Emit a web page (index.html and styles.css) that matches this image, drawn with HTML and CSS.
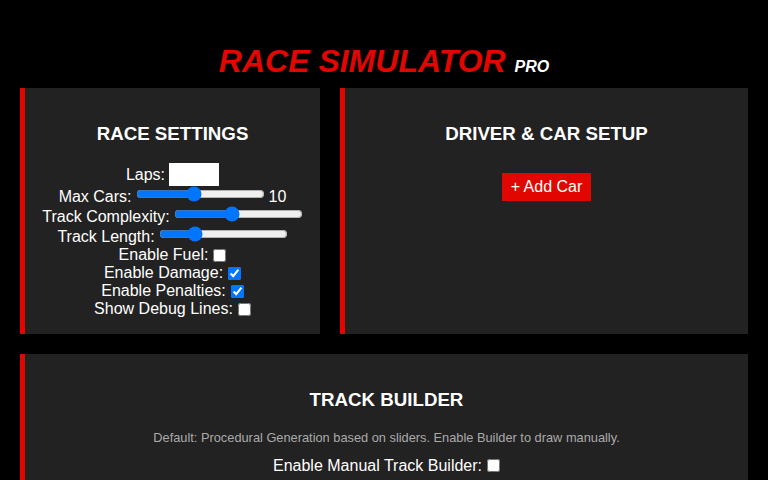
FILE: index.html
```html
<!DOCTYPE html>
<html lang="en">
<head>
  <meta charset="UTF-8" />
  <title>Race Simulator Pro</title>
  <meta name="viewport" content="width=device-width, initial-scale=1.0" />
  <link rel="stylesheet" href="styles.css">
</head>
<body>

  <h1 class="title">RACE SIMULATOR <span class="pro">PRO</span></h1>

  <div class="top-grid">
    <section class="panel">
      <h3>RACE SETTINGS</h3>
      <div class="row">
        <label for="laps">Laps:</label>
        <input type="number" id="laps" class="num-input" />
      </div>
      <div class="row slider-row">
        <label for="maxCars">Max Cars:</label>
        <input type="range" id="maxCars" min="2" max="20" value="10" />
        <span id="maxCarsVal">10</span>
      </div>
      <div class="row slider-row">
        <label for="complexity">Track Complexity:</label>
        <input type="range" id="complexity" min="1" max="10" value="5" />
      </div>
      <div class="row slider-row">
        <label for="trackLength">Track Length:</label>
        <input type="range" id="trackLength" min="1000" max="5000" value="2000" />
      </div>
      <div class="row">
        <label for="fuel">Enable Fuel:</label>
        <input type="checkbox" id="fuel" />
      </div>
      <div class="row">
        <label for="damage">Enable Damage:</label>
        <input type="checkbox" id="damage" checked />
      </div>
      <div class="row">
        <label for="penalties">Enable Penalties:</label>
        <input type="checkbox" id="penalties" checked />
      </div>
      <div class="row">
        <label for="debug">Show Debug Lines:</label>
        <input type="checkbox" id="debug" />
      </div>
    </section>

    <section class="panel">
      <h3>DRIVER &amp; CAR SETUP</h3>
      <div id="carList"></div>
      <button class="add-btn" id="addCar">+ Add Car</button>
    </section>
  </div>

  <section class="panel builder">
    <h3>TRACK BUILDER</h3>
    <p class="hint">Default: Procedural Generation based on sliders. Enable Builder to draw manually.</p>
    <div class="row">
      <label for="manualBuilder">Enable Manual Track Builder:</label>
      <input type="checkbox" id="manualBuilder" />
    </div>
  </section>

  <script>
    const maxCars = document.getElementById("maxCars");
    maxCars.addEventListener('input', () => {
      document.getElementById("maxCarsVal").textContent = maxCars.value;
    });
  </script>

</body>
</html>
```

FILE: styles.css
```css
* {
  box-sizing: border-box;
}

body {
  margin: 0;
  padding: 0 20px;
  background: #000;
  color: #fff;
  font-family: "Liberation Sans", Arial, sans-serif;
  font-size: 16px;
}

.title {
  margin: 43px 0 8px;
  text-align: center;
  font-size: 32px;
  font-style: italic;
  font-weight: bold;
  color: #e10600;
}

.title .pro {
  font-size: 16px;
  color: #fff;
}

.top-grid {
  display: grid;
  grid-template-columns: 300px 1fr;
  gap: 20px;
  margin-bottom: 20px;
}

.panel {
  background: #222;
  border-left: 5px solid #e10600;
  padding: 16px 10px;
  text-align: center;
}

.panel h3 {
  font-size: 1.17em;
  margin: 1em 0;
}

/* one label + control per line, centred */
.row {
  display: flex;
  justify-content: center;
  align-items: center;
  gap: 4px;
  min-height: 18px;
}

/* sliders sit a little above the label text */
.slider-row {
  align-items: flex-end;
}

.row input[type="range"] {
  margin: 0 0 4px;
}

.row input[type="checkbox"] {
  margin: 0 0 0 1px;
}

.num-input {
  width: 50px;
  height: 23px;
  border: none;
  background: #fff;
}

.add-btn {
  margin-top: 10px;
  padding: 5px 9px;
  background: #e10600;
  color: #fff;
  border: none;
  font-family: inherit;
  font-size: 16px;
  cursor: pointer;
}

.add-btn:hover {
  background: #b80500;
}

.hint {
  margin: 0 0 12px;
  font-size: 0.8em;
  color: #aaa;
}
```
